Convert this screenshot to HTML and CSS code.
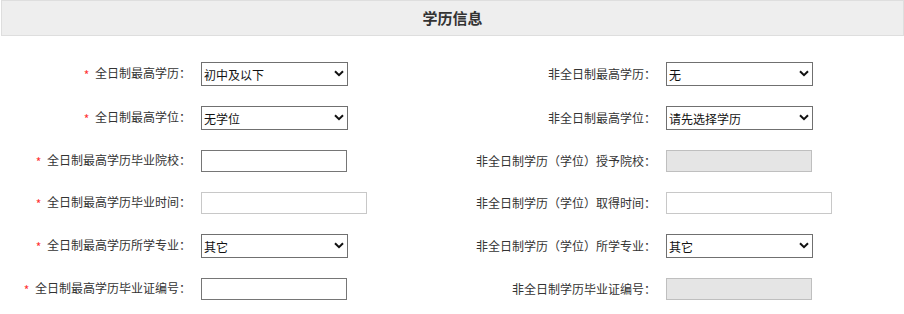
FILE: index.html
```html
<!DOCTYPE html>
<html lang="zh-CN">
<head>
<meta charset="utf-8">
<title>学历信息</title>
<link rel="stylesheet" href="styles.css">
</head>
<body>
<div class="panel">
  <div class="panel-title">学历信息</div>
  <div class="form">
    <div class="row">
      <label class="lbl"><span class="req">*</span> 全日制最高学历：</label>
      <span class="sel-wrap"><select class="sel"><option>初中及以下</option></select><svg class="chev" width="10" height="7" viewBox="0 0 10 7"><path d="M1 1.2 L5 5.2 L9 1.2" fill="none" stroke="#111" stroke-width="2"/></svg></span>
      <label class="lbl">非全日制最高学历：</label>
      <span class="sel-wrap"><select class="sel"><option>无</option></select><svg class="chev" width="10" height="7" viewBox="0 0 10 7"><path d="M1 1.2 L5 5.2 L9 1.2" fill="none" stroke="#111" stroke-width="2"/></svg></span>
    </div>
    <div class="row">
      <label class="lbl"><span class="req">*</span> 全日制最高学位：</label>
      <span class="sel-wrap"><select class="sel"><option>无学位</option></select><svg class="chev" width="10" height="7" viewBox="0 0 10 7"><path d="M1 1.2 L5 5.2 L9 1.2" fill="none" stroke="#111" stroke-width="2"/></svg></span>
      <label class="lbl">非全日制最高学位：</label>
      <span class="sel-wrap"><select class="sel"><option>请先选择学历</option></select><svg class="chev" width="10" height="7" viewBox="0 0 10 7"><path d="M1 1.2 L5 5.2 L9 1.2" fill="none" stroke="#111" stroke-width="2"/></svg></span>
    </div>
    <div class="row">
      <label class="lbl"><span class="req">*</span> 全日制最高学历毕业院校：</label>
      <input class="txt" type="text">
      <label class="lbl">非全日制学历（学位）授予院校：</label>
      <input class="txt txt-dis" type="text" disabled>
    </div>
    <div class="row">
      <label class="lbl"><span class="req">*</span> 全日制最高学历毕业时间：</label>
      <input class="txt txt-date" type="text">
      <label class="lbl">非全日制学历（学位）取得时间：</label>
      <input class="txt txt-date" type="text">
    </div>
    <div class="row">
      <label class="lbl"><span class="req">*</span> 全日制最高学历所学专业：</label>
      <span class="sel-wrap"><select class="sel"><option>其它</option></select><svg class="chev" width="10" height="7" viewBox="0 0 10 7"><path d="M1 1.2 L5 5.2 L9 1.2" fill="none" stroke="#111" stroke-width="2"/></svg></span>
      <label class="lbl">非全日制学历（学位）所学专业：</label>
      <span class="sel-wrap"><select class="sel"><option>其它</option></select><svg class="chev" width="10" height="7" viewBox="0 0 10 7"><path d="M1 1.2 L5 5.2 L9 1.2" fill="none" stroke="#111" stroke-width="2"/></svg></span>
    </div>
    <div class="row">
      <label class="lbl"><span class="req">*</span> 全日制最高学历毕业证编号：</label>
      <input class="txt" type="text">
      <label class="lbl">非全日制学历毕业证编号：</label>
      <input class="txt txt-dis" type="text" disabled>
    </div>
  </div>
</div>
</body>
</html>
```

FILE: styles.css
```css
html, body {
  margin: 0;
  padding: 0;
  background: #fff;
}

body {
  font-family: "Noto Sans CJK SC", "Liberation Sans", sans-serif;
  font-size: 12px;
  color: #333;
}

.panel-title {
  margin-left: 1px;
  height: 34px;
  line-height: 34px;
  border: 1px solid #dedede;
  background: #eeeeee;
  text-align: center;
  font-size: 15px;
  font-weight: bold;
  color: #333;
}

.form {
  padding-top: 16px;
}

.row {
  display: grid;
  grid-template-columns: 201px 265px 200px 1fr;
  align-items: center;
  padding: 10px 0;
}

.lbl {
  text-align: right;
  padding-right: 10px;
  line-height: 16px;
  white-space: nowrap;
  color: #333;
}

.req {
  color: #f33;
  margin-right: 3px;
  vertical-align: -2px;
}

.sel-wrap {
  position: relative;
  display: block;
  width: 147px;
  height: 24px;
}

.sel {
  appearance: none;
  -webkit-appearance: none;
  box-sizing: border-box;
  width: 147px;
  height: 24px;
  margin: 0;
  padding: 0 0 0 2px;
  border: 1px solid #707070;
  border-radius: 0;
  background: #fff;
  font-family: "Noto Sans CJK SC", sans-serif;
  font-size: 12px;
  color: #111;
  outline: none;
}

.chev {
  position: absolute;
  right: 4px;
  top: 8px;
  pointer-events: none;
}

.txt {
  box-sizing: border-box;
  width: 146px;
  height: 22px;
  margin: 0;
  padding: 0 2px;
  border: 1px solid #767676;
  border-radius: 0;
  background: #fff;
  font-family: "Noto Sans CJK SC", sans-serif;
  font-size: 12px;
  outline: none;
}

.txt-date {
  width: 166px;
  border-color: #c8c8c8;
}

.txt-dis {
  background: #e5e5e5;
  border-color: #bfbfbf;
}
```
